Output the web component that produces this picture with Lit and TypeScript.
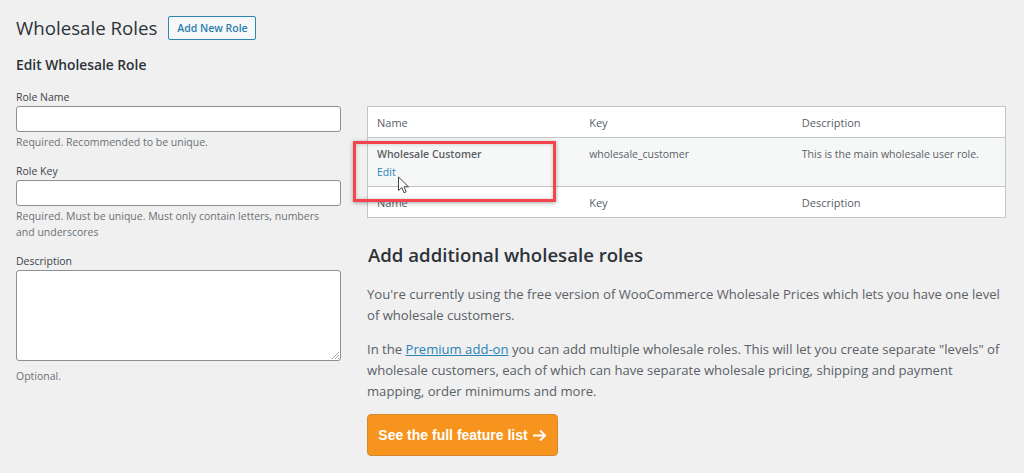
import { LitElement, html, css } from "lit";
import { customElement } from "lit/decorators.js";

@customElement("app-root")
export class AppRoot extends LitElement {
  static styles = css`
    :host {
      display: block;
      position: relative;
      width: 1024px;
      height: 473px;
      overflow: hidden;
      background: #f0f0f1;
      color: #3c434a;
      font-family: "Open Sans", "Noto Sans", sans-serif;
      font-size: 10.5px;
    }
    .page { padding: 15px 18px 0 16px; }
    .head { display: flex; align-items: center; gap: 11px; height: 25px; }
    h1 { margin: 0; font-size: 18.7px; font-weight: 400; color: #2c3338; line-height: 25px; }
    .add {
      box-sizing: border-box; width: 88px; height: 24px; display: flex; align-items: center; justify-content: center;
      border: 1px solid #2a83b5; border-radius: 2px; color: #2a7fae; font-weight: 600; font-size: 10.5px;
      background: #f6f7f7;
    }
    .cols { display: grid; grid-template-columns: 325px 639px; column-gap: 26px; }
    h2 { margin: 16px 0 16px; font-size: 13.8px; line-height: 18px; font-weight: 600; color: #2c3338; }
    .left { display: flex; flex-direction: column; }
    .field { display: flex; flex-direction: column; margin-bottom: 14px; }
    label { line-height: 15px; height: 15px; margin-bottom: 1px; color: #3c434a; }
    .input { box-sizing: border-box; height: 26px; background: #fff; border: 1px solid #8c8f94; border-radius: 3px; }
    .area { box-sizing: border-box; height: 91px; background: #fff; border: 1px solid #8c8f94; border-radius: 3px; position: relative; }
    .grip { position: absolute; right: 0; bottom: 0; }
    .hint { margin: 2px 0 0; color: #6b7075; line-height: 16px; font-size: 10.5px; }
    .hint.last { margin-top: 7px; }
    .right { padding-top: 66px; }
    table { width: 100%; border-collapse: collapse; background: #fff; border: 1px solid #c3c4c7; table-layout: fixed; }
    th, td { text-align: left; font-weight: 400; padding: 0 9px; vertical-align: top; color: #5a6066; }
    th { height: 30px; vertical-align: middle; font-size: 11px; }
    thead th { border-bottom: 1px solid #c3c4c7; }
    tfoot th { height: 30px; border-top: 1px solid #c3c4c7; }
    tbody tr { background: #f6f7f7; }
    td { height: 49px; padding-top: 8px; box-sizing: border-box; line-height: 16px; }
    td strong { font-weight: 600; display: block; margin-bottom: 2px; color: #5a6066; }
    .edit { color: #2a83b5; display: block; }
    h3 { margin: 25px 0 0; font-size: 18.6px; line-height: 24px; font-weight: 600; color: #2c3338; padding-left: 1px; }
    p { margin: 0; font-size: 13.1px; line-height: 21px; color: #5a6066; }
    p.a { margin-top: 17px; }
    p.b { margin-top: 13px; }
    p a { color: #2a83b5; text-decoration: underline; }
    .cta {
      box-sizing: border-box; margin-top: 12px; width: 191px; height: 42px; display: flex; align-items: center; justify-content: center; gap: 4px;
      background: #f7941d; border: 1px solid #d1892f; border-radius: 4px; color: #fff; font-family: "Liberation Sans", Arial, sans-serif; font-weight: 700; font-size: 14px;
    }
    .mark {
      position: absolute; left: 353px; top: 141px; width: 203px; height: 61px; box-sizing: border-box;
      border: 3px solid #f4444e; box-shadow: 0 1px 4px rgba(0,0,0,.35), inset 0 0 4px rgba(0,0,0,.2);
    }
    .cursor { position: absolute; left: 397px; top: 176px; }
  `;

  render() {
    return html`
      <div class="page">
        <div class="head">
          <h1>Wholesale Roles</h1>
          <span class="add">Add New Role</span>
        </div>
        <div class="cols">
          <div class="left">
            <h2>Edit Wholesale Role</h2>
            <div class="field">
              <label>Role Name</label>
              <div class="input"></div>
              <div class="hint">Required. Recommended to be unique.</div>
            </div>
            <div class="field">
              <label>Role Key</label>
              <div class="input"></div>
              <div class="hint">Required. Must be unique. Must only contain letters, numbers<br />and underscores</div>
            </div>
            <div class="field">
              <label>Description</label>
              <div class="area">
                <svg class="grip" width="9" height="9" viewBox="0 0 9 9"><path d="M1 8L8 1M4 8L8 4M7 8L8 7" stroke="#8c8f94" stroke-width=".8" fill="none"/></svg>
              </div>
              <div class="hint last">Optional.</div>
            </div>
          </div>
          <div class="right">
            <table>
              <thead><tr><th>Name</th><th>Key</th><th>Description</th></tr></thead>
              <tbody>
                <tr>
                  <td><strong>Wholesale Customer</strong><span class="edit">Edit</span></td>
                  <td>wholesale_customer</td>
                  <td>This is the main wholesale user role.</td>
                </tr>
              </tbody>
              <tfoot><tr><th>Name</th><th>Key</th><th>Description</th></tr></tfoot>
            </table>
            <h3>Add additional wholesale roles</h3>
            <p class="a">You're currently using the free version of WooCommerce Wholesale Prices which lets you have one level of wholesale customers.</p>
            <p class="b">In the <a>Premium add-on</a> you can add multiple wholesale roles. This will let you create separate "levels" of wholesale customers, each of which can have separate wholesale pricing, shipping and payment mapping, order minimums and more.</p>
            <div class="cta">See the full feature list
              <svg width="15" height="13" viewBox="0 0 15 13"><path d="M1 6.5H13M8 1.5L13.2 6.5L8 11.5" stroke="#fff" stroke-width="1.8" fill="none"/></svg>
            </div>
          </div>
        </div>
      </div>
      <div class="mark"></div>
      <svg class="cursor" width="14" height="19" viewBox="0 0 14 19"><path d="M1.5 1V14.5L4.8 11.6L7 16.8L9.2 15.8L7 10.8H11.5Z" fill="#fff" stroke="#444" stroke-width="1"/></svg>
    `;
  }
}
